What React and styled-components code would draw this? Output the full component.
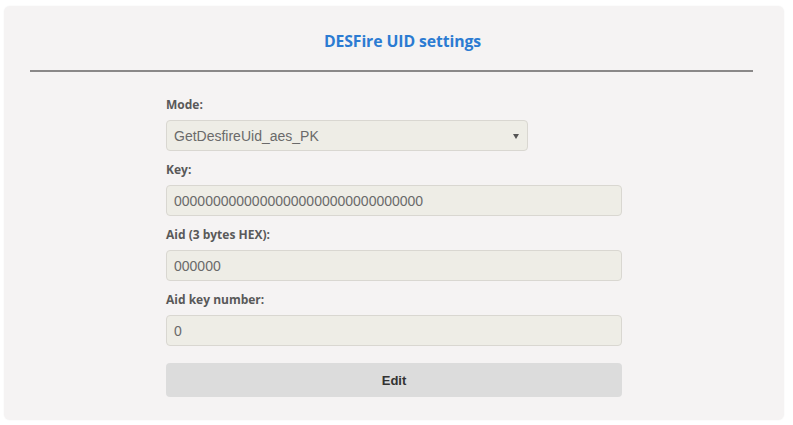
import styled, { createGlobalStyle } from "styled-components";

const GlobalStyle = createGlobalStyle`
  body {
    margin: 0;
    background: #ffffff;
    font-family: "Open Sans", "Liberation Sans", Arial, sans-serif;
  }
`;

const Page = styled.div`
  width: 793px;
  height: 425px;
  padding: 6px 9px 5px 4px;
  box-sizing: border-box;
`;

const Panel = styled.div`
  height: 100%;
  background: #f5f3f3;
  border-radius: 6px;
  box-shadow: 0 0 2px rgba(0, 0, 0, 0.06);
  padding: 24px 31px 0 26px;
  box-sizing: border-box;
`;

const Title = styled.h2`
  margin: 0;
  text-align: center;
  font-size: 15.8px;
  font-weight: 700;
  color: #2b7bd2;
  line-height: 22px;
  letter-spacing: -0.1px;
  padding-left: 22px;
`;

const Divider = styled.hr`
  margin: 18px 0 0 0;
  border: none;
  height: 2px;
  background: #8a8888;
`;

const Form = styled.form`
  width: 456px;
  margin: 24px 0 0 136px;
  display: flex;
  flex-direction: column;
`;

const Label = styled.label`
  font-size: 12px;
  font-weight: 700;
  color: #595959;
  line-height: 17px;
  margin-bottom: 7px;
`;

const Field = styled.div`
  width: ${(p) => p.$width || "100%"};
  height: 31px;
  box-sizing: border-box;
  background: #eeede6;
  border: 1px solid #d9d7d1;
  border-radius: 4px;
  display: flex;
  align-items: center;
  justify-content: space-between;
  padding: 0 8px 0 7px;
  margin-bottom: 10px;
  font-family: "Liberation Sans", Arial, sans-serif;
  font-size: 14px;
  color: #6a6a6a;
`;

const Caret = styled.span`
  width: 0;
  height: 0;
  border-left: 3px solid transparent;
  border-right: 3px solid transparent;
  border-top: 5px solid #555;
  margin-top: 1px;
`;

const Button = styled.button`
  height: 34px;
  margin-top: 7px;
  border: none;
  border-radius: 4px;
  background: #dcdcdc;
  font-family: "Liberation Sans", Arial, sans-serif;
  font-size: 13px;
  font-weight: 700;
  color: #333;
`;

export default function App() {
  return (
    <>
      <GlobalStyle />
      <Page>
        <Panel>
          <Title>DESFire UID settings</Title>
          <Divider />
          <Form>
            <Label>Mode:</Label>
            <Field $width="362px">
              <span>GetDesfireUid_aes_PK</span>
              <Caret />
            </Field>
            <Label>Key:</Label>
            <Field>00000000000000000000000000000000</Field>
            <Label>Aid (3 bytes HEX):</Label>
            <Field>000000</Field>
            <Label>Aid key number:</Label>
            <Field>0</Field>
            <Button type="button">Edit</Button>
          </Form>
        </Panel>
      </Page>
    </>
  );
}
